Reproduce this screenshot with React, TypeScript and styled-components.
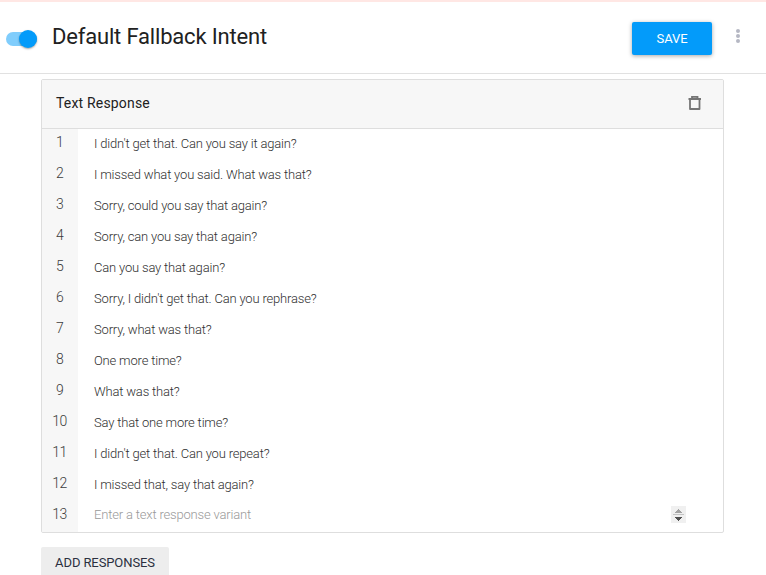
import React from "react";
import styled, { createGlobalStyle } from "styled-components";

const GlobalStyle = createGlobalStyle`
  * { box-sizing: border-box; }
  html, body { margin: 0; height: 100%; overflow: hidden; background: #fff; }
  body { font-family: Roboto, "Liberation Sans", sans-serif; color: #212121; }
  button { font-family: inherit; border: 0; padding: 0; cursor: pointer; }
`;

const Page = styled.div`
  height: 575px;
  overflow: hidden;
  border-top: 2px solid #ffe7e4;
`;

const Header = styled.header`
  display: flex;
  align-items: flex-start;
  height: 72px;
  padding: 0 26px 0 6px;
  border-bottom: 1px solid #e1e1e1;
`;

const Toggle = styled.button`
  display: flex;
  align-items: center;
  justify-content: flex-end;
  width: 31px;
  height: 14px;
  margin-top: 30px;
  border-radius: 7px;
  background: #80cdfc;
`;

const Knob = styled.span`
  flex: none;
  width: 18px;
  height: 18px;
  border-radius: 50%;
  background: #039bfa;
  box-shadow: 0 1px 2px rgba(0, 0, 0, 0.35);
`;

const Title = styled.h1`
  flex: 1;
  margin: 21px 0 0 15px;
  font-size: 22px;
  line-height: 28px;
  font-weight: 400;
  letter-spacing: -0.18px;
`;

const SaveButton = styled.button`
  width: 80px;
  height: 33px;
  margin-top: 20px;
  border-radius: 2px;
  background: #039bfa;
  color: #fff;
  font-size: 13px;
  line-height: 33px;
  letter-spacing: -0.1px;
  box-shadow: 0 1px 4px rgba(0, 0, 0, 0.35);
`;

const MoreButton = styled.button`
  display: flex;
  flex-direction: column;
  gap: 1px;
  margin: 27px 0 0 24px;
  background: none;
`;

const Dot = styled.span`
  width: 4px;
  height: 4px;
  border-radius: 50%;
  background: #b5b7c3;
`;

const Main = styled.main`
  padding: 5px 42px 0 41px;
`;

const Card = styled.section`
  height: 454px;
  border: 1px solid #dedede;
  border-radius: 2px;
  overflow: hidden;
`;

const CardHeader = styled.div`
  display: flex;
  align-items: center;
  justify-content: space-between;
  height: 49px;
  padding: 0 22px 2px 14px;
  background: #f7f7f7;
  border-bottom: 1px solid #dedede;
`;

const CardTitle = styled.h2`
  margin: 0;
  font-size: 14px;
  line-height: 20px;
  font-weight: 400;
  letter-spacing: 0.18px;
`;

const DeleteButton = styled.button`
  display: flex;
  background: none;
`;

const Row = styled.div`
  display: flex;
  height: 31px;
`;

const RowNumber = styled.div`
  flex: none;
  width: 36px;
  padding: 3px 1px 0 0;
  background: #f7f7f7;
  color: #3c3c3c;
  font-size: 14px;
  line-height: 20px;
  font-weight: 300;
  letter-spacing: -0.6px;
  text-align: center;
`;

const RowText = styled.div<{ $placeholder?: boolean }>`
  flex: 1;
  padding: ${(p) => (p.$placeholder ? 4 : 5)}px 0 0 16px;
  color: ${(p) => (p.$placeholder ? "#999" : "#303030")};
  font-size: 13px;
  line-height: 20px;
  font-weight: 300;
  letter-spacing: -0.18px;
`;

const Spinner = styled.div`
  width: 15px;
  height: 17px;
  margin: 5px 37px 0 0;
  background: #f0f0f0;
`;

const AddButton = styled.button`
  display: block;
  width: 128px;
  height: 33px;
  margin-top: 14px;
  padding-bottom: 2px;
  border-radius: 2px;
  background: #ededed;
  color: #2b303f;
  font-size: 13px;
  letter-spacing: -0.1px;
`;

const responses = [
  "I didn't get that. Can you say it again?",
  "I missed what you said. What was that?",
  "Sorry, could you say that again?",
  "Sorry, can you say that again?",
  "Can you say that again?",
  "Sorry, I didn't get that. Can you rephrase?",
  "Sorry, what was that?",
  "One more time?",
  "What was that?",
  "Say that one more time?",
  "I didn't get that. Can you repeat?",
  "I missed that, say that again?",
];

export default function App() {
  return (
    <Page>
      <GlobalStyle />
      <Header>
        <Toggle role="switch" aria-checked="true" aria-label="Enable intent">
          <Knob />
        </Toggle>
        <Title>Default Fallback Intent</Title>
        <SaveButton>SAVE</SaveButton>
        <MoreButton aria-label="More options">
          <Dot />
          <Dot />
          <Dot />
        </MoreButton>
      </Header>
      <Main>
        <Card>
          <CardHeader>
            <CardTitle>Text Response</CardTitle>
            <DeleteButton aria-label="Delete">
              <svg width="13" height="15" viewBox="0 0 13 15" fill="none" stroke="#757575">
                <path d="M0.5 3H13" strokeWidth="2" />
                <path d="M4 2.5V0.8H9.5V2.5" strokeWidth="1.8" />
                <path d="M2 3V13H11.5V3" strokeWidth="1.8" strokeLinejoin="round" />
              </svg>
            </DeleteButton>
          </CardHeader>
          {responses.map((text, i) => (
            <Row key={i}>
              <RowNumber>{i + 1}</RowNumber>
              <RowText>{text}</RowText>
            </Row>
          ))}
          <Row>
            <RowNumber>{responses.length + 1}</RowNumber>
            <RowText $placeholder>Enter a text response variant</RowText>
            <Spinner>
              <svg width="15" height="17" viewBox="0 0 15 17" shapeRendering="crispEdges" display="block">
                <path d="M7 3h1v1h1v1h1v1h1v1H4V6h1V5h1V4h1z" fill="#a3a3a3" />
                <path d="M2 8h11v1H2z" fill="#c4c4c4" />
                <path d="M4 11h7v1h-1v1H9v1H8v1H7v-1H6v-1H5v-1H4z" fill="#505050" />
              </svg>
            </Spinner>
          </Row>
        </Card>
        <AddButton>ADD RESPONSES</AddButton>
      </Main>
    </Page>
  );
}
